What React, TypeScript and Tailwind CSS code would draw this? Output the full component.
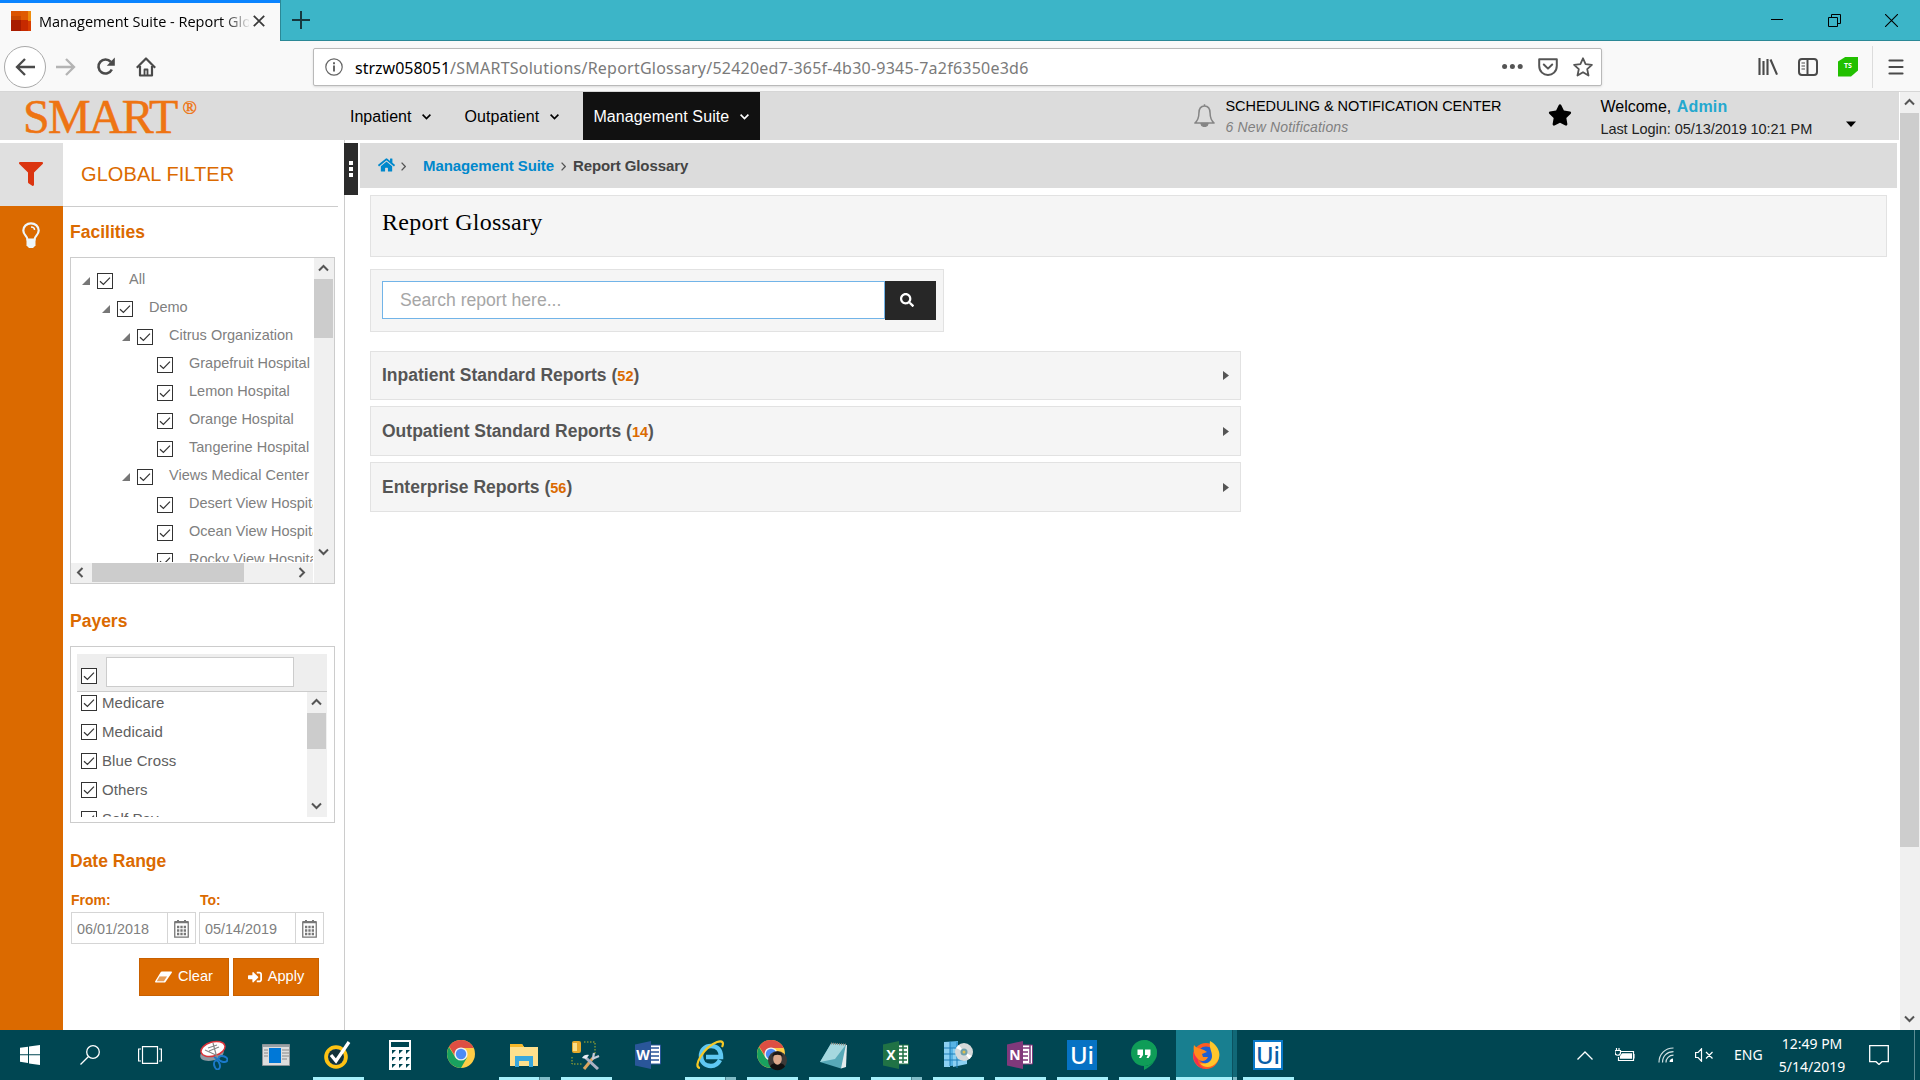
import type { ReactNode } from "react";
import { FaFilter, FaHome, FaSearch, FaStar, FaSignInAlt } from "react-icons/fa";

function CheckBox() {
  return (
    <svg className="block size-4 shrink-0" viewBox="0 0 16 16" fill="none">
      <rect x="0.5" y="0.5" width="15" height="15" fill="#fff" stroke="#333" />
      <path d="M3 8.2l3.4 3.3L13 4.6" stroke="#333" strokeWidth="1.2" />
    </svg>
  );
}

type Direction = "up" | "down" | "left" | "right";

const arrowPaths: Record<Direction, string> = {
  up: "M1 7.5L5.5 3L10 7.5",
  down: "M1 3.5L5.5 8L10 3.5",
  left: "M7.5 1L3 5.5L7.5 10",
  right: "M3.5 1L8 5.5L3.5 10",
};

function ScrollArrow({ dir }: { dir: Direction }) {
  return (
    <svg className="block size-[11px]" viewBox="0 0 11 11" fill="none">
      <path d={arrowPaths[dir]} stroke="#555" strokeWidth="2" />
    </svg>
  );
}

function TitleBar() {
  return (
    <div className="flex h-[41px] bg-[#3cb5c8]">
      <div className="flex h-[41px] w-[280px] shrink-0 border-t-[3px] border-[#0a84ff] bg-[#f9f9f9] pl-[11px]">
        <svg className="mt-2 size-5 shrink-0" viewBox="0 0 20 20">
          <path d="M0 0h20v20H0z" fill="#c62a00" />
          <path d="M0 0h10v5H0z" fill="#dc5400" />
          <path d="M0 5h10v4H0z" fill="#c84800" />
          <path d="M10 0h7v9h-7z" fill="#e05a00" />
          <path d="M17 0h3v10h-3z" fill="#ee8c0c" />
          <path d="M0 9h10v11H0z" fill="#a81c00" />
          <path d="M17 10h3v10h-3z" fill="#d83c00" />
        </svg>
        <div className="mt-2 ml-2 h-[22px] w-[210px] overflow-hidden bg-gradient-to-r from-black from-85% to-[#e8e8e8] to-100% bg-clip-text font-['Open_Sans',sans-serif] text-[14.5px] leading-[22px] whitespace-nowrap text-transparent">
          Management Suite - Report Glo
        </div>
        <svg className="mt-3 ml-[4px] size-3 shrink-0" viewBox="0 0 12 12" stroke="#3a3a3a" strokeWidth="1.8">
          <path d="M.8.8l10.4 10.4M11.2.8L.8 11.2" />
        </svg>
      </div>
      <div className="flex flex-1 border-b border-l border-[#2b8896] pl-[11px]">
        <svg className="mt-[11px] size-[18px]" viewBox="0 0 18 18" stroke="#16373d" strokeWidth="2">
          <path d="M9 0v18M0 9h18" />
        </svg>
        <div className="ml-auto flex h-10 items-center pr-[22px]">
          <svg className="mr-[45px] h-3 w-3" viewBox="0 0 12 12" stroke="#000">
            <path d="M0 5.5h12" />
          </svg>
          <svg className="mr-[44px] size-[13px]" viewBox="0 0 13 13" fill="none" stroke="#000">
            <path d="M.5 3.5h9v9h-9zM3.5 3.5v-3h9v9h-3" />
          </svg>
          <svg className="size-[13px]" viewBox="0 0 13 13" stroke="#000" strokeWidth="1.1">
            <path d="M0 0l13 13M13 0L0 13" />
          </svg>
        </div>
      </div>
    </div>
  );
}

function AddressBar() {
  return (
    <div className="flex h-[51px] items-center border-b border-[#d6d6d6] bg-[#f9f9f9] pt-px">
      <div className="ml-1 flex size-[42px] items-center justify-center rounded-full border border-[#a9a9a9] bg-white">
        <svg className="mr-px h-[18px] w-5" viewBox="0 0 20 18" fill="none" stroke="#4a4a4a" strokeWidth="2.3">
          <path d="M20 9H2M10 1L2 9l8 8" />
        </svg>
      </div>
      <svg className="ml-[10px] h-[18px] w-5" viewBox="0 0 20 18" fill="none" stroke="#b4b4b4" strokeWidth="2.3">
        <path d="M0 9h18M10 1l8 8-8 8" />
      </svg>
      <svg className="ml-5 size-[19px]" viewBox="0 0 19 19" fill="none" stroke="#4a4a4a" strokeWidth="2.6">
        <path d="M15.8 12.5a7 7 0 1 1-1-7.6" />
        <path d="M18.8.5v8.2h-8z" fill="#4a4a4a" stroke="none" />
      </svg>
      <svg className="ml-[21px] size-5" viewBox="0 0 20 20" fill="none" stroke="#4a4a4a" strokeWidth="2.2" strokeLinejoin="round">
        <path d="M.8 10.8L10 1.5l9.2 9.3M4 9v9.5h12V9" />
        <path d="M8.5 18v-5.5h3V18" strokeWidth="1.8" />
      </svg>
      <div className="ml-[157px] flex h-[38px] w-[1289px] items-center rounded-[2px] border border-[#b9b9b9] bg-white shadow-sm">
        <svg className="ml-[11px] size-[18px]" viewBox="0 0 18 18" fill="none" stroke="#666">
          <circle cx="9" cy="9" r="8.2" strokeWidth="1.2" />
          <path d="M9 7.6v6M9 4.2v2" strokeWidth="2" />
        </svg>
        <div className="mt-0.5 ml-3 font-['Noto_Sans',sans-serif] text-base whitespace-nowrap text-black">
          strzw058051
          <span className="tracking-[0.23px] text-[#7a7a7a]">/SMARTSolutions/ReportGlossary/52420ed7-365f-4b30-9345-7a2f6350e3d6</span>
        </div>
        <svg className="ml-auto h-[5px] w-[21px]" viewBox="0 0 21 5" fill="#555">
          <circle cx="2.6" cy="2.5" r="2.5" />
          <circle cx="10.4" cy="2.5" r="2.5" />
          <circle cx="18.2" cy="2.5" r="2.5" />
        </svg>
        <svg className="ml-[15px] h-[18px] w-5" viewBox="0 0 20 18" fill="none" stroke="#555" strokeWidth="2" strokeLinecap="round" strokeLinejoin="round">
          <path d="M1.2 1.2h17.6v6.5c0 12.3-17.6 12.3-17.6 0z" />
          <path d="M5.8 6.5L10 10.6l4.2-4.1" />
        </svg>
        <svg className="mr-2 ml-[15px] size-5" viewBox="0 0 20 20" fill="none" stroke="#555" strokeWidth="1.8" strokeLinejoin="round">
          <path d="M10 1.3l2.6 5.8 6.3.7-4.7 4.3 1.3 6.4-5.5-3.3-5.5 3.3 1.3-6.4L1.1 7.8l6.3-.7z" />
        </svg>
      </div>
      <svg className="ml-[156px] h-[18px] w-5" viewBox="0 0 20 18" stroke="#4a4a4a" strokeWidth="2.1">
        <path d="M1.5 0v17M5.5 3v14M9.500 1v16M12.500 1.500l6.500 15.200" />
      </svg>
      <svg className="ml-5 h-[18px] w-5" viewBox="0 0 20 18" fill="none" stroke="#4a4a4a" strokeWidth="2">
        <rect x="1" y="1" width="18" height="16" rx="3" />
        <path d="M9.5 1v16" />
        <path d="M3.5 5h3.5M3.5 8h3.5M3.5 11h3.5" strokeWidth="1.2" />
      </svg>
      <div className="ml-5 flex h-5 w-5 items-center justify-center bg-[#22c000] font-['Open_Sans',sans-serif] text-[7px] font-bold text-white [clip-path:polygon(40%_0,100%_0,100%_70%,65%_100%,0_100%,0_25%)]">
        TS
      </div>
      <div className="ml-[14px] h-[42px] w-px bg-[#dcdcdc]" />
      <svg className="ml-[15px] h-4 w-4" viewBox="0 0 16 16" stroke="#4a4a4a" strokeWidth="2.2" strokeLinecap="round">
        <path d="M1.5 1.5h13M1.5 8h13M1.5 14.5h13" />
      </svg>
    </div>
  );
}

function Chevron({ className = "" }: { className?: string }) {
  return (
    <svg className={`h-1.5 w-[9px] ${className}`} viewBox="0 0 9 6" fill="none" stroke="currentColor" strokeWidth="1.6">
      <path d="M.6.6l3.9 4L8.4.6" />
    </svg>
  );
}

function AppHeader() {
  return (
    <div className="flex h-12 bg-[#dcdcdc] text-black">
      <div className="flex w-[350px] items-start pl-[23px] font-['Liberation_Serif',serif] text-[#ee7413]">
        <span className="mt-[-2px] text-[48px] leading-[54px] tracking-[-1.8px] [-webkit-text-stroke:0.5px_#ee7413]">SMART</span>
        <span className="mt-[6px] ml-[6px] text-[19px] leading-5 [-webkit-text-stroke:0.4px_#ee7413]">®</span>
      </div>
      <div className="flex items-center text-base whitespace-nowrap">
        <span className="mt-0.5">Inpatient</span>
        <Chevron className="mt-0.5 ml-[11px]" />
        <span className="mt-0.5 ml-[33px] tracking-[0.12px]">Outpatient</span>
        <Chevron className="mt-0.5 ml-[11px]" />
        <div className="ml-6 flex h-12 w-[177px] items-center bg-[#111] pl-[10px] text-white">
          <span className="mt-0.5 tracking-[0.1px]">Management Suite</span>
          <Chevron className="mt-0.5 ml-[11px]" />
        </div>
      </div>
      <svg className="mt-3 ml-[434px] h-[23px] w-[21px]" viewBox="0 0 21 23" fill="none" stroke="#858585" strokeWidth="1.5" strokeLinejoin="round">
        <path d="M10.5 2c-4 0-5.6 3.300-5.600 7.300 0 5-2 8-4 9.700h19.200c-2-1.700-4-4.700-4-9.700 0-4-1.600-7.300-5.600-7.300zM10.500 2V.3" />
        <path d="M7 19.500c.5 3.800 6.500 3.800 7 0z" fill="#858585" />
      </svg>
      <div className="ml-[10px] w-[277px] whitespace-nowrap">
        <div className="mt-[5px] text-[14.5px] leading-[18px] tracking-[-0.05px]">SCHEDULING &amp; NOTIFICATION CENTER</div>
        <div className="mt-[3px] text-sm leading-[18px] tracking-[0.17px] text-[#808080] italic">6 New Notifications</div>
      </div>
      <FaStar className="mt-[11px] ml-[46px] size-6" />
      <div className="ml-[28px] w-[212px] whitespace-nowrap">
        <div className="mt-[5px] text-base leading-5">
          Welcome, <span className="ml-px font-bold tracking-[0.2px] text-[#24a8cf]">Admin</span>
        </div>
        <div className="mt-[3px] text-[14.500px] leading-[18px] tracking-[-0.06px] text-[#222]">Last Login: 05/13/2019 10:21 PM</div>
      </div>
      <svg className="mt-[29px] ml-[34px] h-[6px] w-[10px]" viewBox="0 0 10 6">
        <path d="M0 .5h10L5 6z" />
      </svg>
    </div>
  );
}

const tree = [
  { label: "All", level: 0, open: true },
  { label: "Demo", level: 1, open: true },
  { label: "Citrus Organization", level: 2, open: true },
  { label: "Grapefruit Hospital", level: 3 },
  { label: "Lemon Hospital", level: 3 },
  { label: "Orange Hospital", level: 3 },
  { label: "Tangerine Hospital", level: 3 },
  { label: "Views Medical Center", level: 2, open: true },
  { label: "Desert View Hospital", level: 3 },
  { label: "Ocean View Hospital", level: 3 },
  { label: "Rocky View Hospital", level: 3 },
];

const indents = ["pl-[11px]", "pl-[31px]", "pl-[51px]", "pl-[71px]"];

const payers = ["Medicare", "Medicaid", "Blue Cross", "Others", "Self Pay"];

function Heading({ children }: { children: ReactNode }) {
  return <div className="text-[17.5px] leading-6 font-bold text-[#db6a00]">{children}</div>;
}

function DateField({ value }: { value: string }) {
  return (
    <div className="flex h-8 w-[125px] border border-[#d5d5d5] bg-white">
      <div className="w-[96px] border-r border-[#d5d5d5] pl-[5px] text-[14.4px] leading-8 text-[#808080]">{value}</div>
      <svg className="mt-[7px] ml-[6px] h-[18px] w-[15px]" viewBox="0 0 15 18" fill="none" stroke="#777">
        <path d="M.75 2h13.500v15.200H.75z" strokeWidth="1.300" />
        <path d="M1 2.200h13M3 1h2M10 1h2" strokeWidth="2.200" />
        <path d="M3 7h9M3 10.500h9M3 14h9" strokeWidth="2.400" strokeDasharray="2.300 1.050" />
      </svg>
    </div>
  );
}

function Sidebar() {
  return (
    <div className="flex w-[345px] shrink-0 border-r border-[#ccc]">
      <div className="mt-[3px] w-[63px] shrink-0 bg-[#db6a00]">
        <div className="flex h-[63px] pt-[19px] pl-[19px] bg-[#e0e0e0]">
          <FaFilter className="size-6 text-[#db3510]" />
        </div>
        <svg className="mt-4 ml-[22px] h-[27px] w-[18px]" viewBox="0 0 18 27" fill="none" stroke="#eef6fa" strokeWidth="2.200">
          <path d="M5.500 17.500C5.500 14 1.300 13 1.300 8.500a7.700 7.200 0 0 1 15.400 0c0 4.500-4.200 5.500-4.200 9z" />
          <path d="M9 5c2 0 3.500 1 3.500 3" strokeWidth="1.500" />
          <path d="M4.500 17h9v6.500L11 26H7l-2.500-2.500z" fill="#eef6fa" stroke="none" />
        </svg>
      </div>
      <div className="w-[275px]">
        <div className="h-[67px] border-b border-[#ccc] pl-[18px] text-xl leading-[69px] tracking-[0.08px] text-[#db6a00]">GLOBAL FILTER</div>
        <div className="pl-[7px]">
          <div className="mt-[13px]">
            <Heading>Facilities</Heading>
          </div>
          <div className="mt-[13px] flex h-[327px] w-[265px] flex-col border border-[#ccc]">
            <div className="flex h-[304px]">
              <div className="mr-px h-[304px] w-[242px] overflow-hidden pt-2">
                {tree.map((n) => (
                  <div key={n.label} className={`flex h-7 items-center ${indents[n.level]}`}>
                    <svg className="mt-px mr-[7px] size-2 shrink-0" viewBox="0 0 8 8">
                      {n.open && <path d="M8 0v8H0z" fill="#777" />}
                    </svg>
                    <div className="mt-px">
                      <CheckBox />
                    </div>
                    <span className="-mt-[3px] ml-4 text-[14.5px] leading-5 whitespace-nowrap text-[#808080]">{n.label}</span>
                  </div>
                ))}
              </div>
              <div className="flex w-5 flex-col items-center bg-[#f0f0f0] pt-[5px] pr-px pb-[5px]">
                <ScrollArrow dir="up" />
                <div className="mt-[5px] h-[59px] w-[19px] bg-[#ccc]" />
                <div className="mt-auto">
                  <ScrollArrow dir="down" />
                </div>
              </div>
            </div>
            <div className="flex h-[21px]">
              <div className="mt-px flex h-5 w-[242px] items-center bg-[#f0f0f0] pb-px pl-1">
                <ScrollArrow dir="left" />
                <div className="ml-[6px] h-[19px] w-[152px] bg-[#ccc]" />
                <div className="mr-[6px] ml-auto">
                  <ScrollArrow dir="right" />
                </div>
              </div>
              <div className="ml-px w-5 bg-[#f0f0f0]" />
            </div>
          </div>
          <div className="mt-[25px]">
            <Heading>Payers</Heading>
          </div>
          <div className="mt-[13px] h-[177px] w-[265px] border border-[#ccc] pt-[7px] pl-[6px]">
            <div className="flex h-[38px] w-[250px] border-b border-[#ccc] bg-[#eee] pl-1">
              <div className="mt-[14px]">
                <CheckBox />
              </div>
              <input className="mt-[3px] ml-[9px] h-[30px] w-[188px] border border-[#ccc] bg-white" readOnly />
            </div>
            <div className="flex h-[125px] w-[250px]">
              <div className="h-[125px] w-[230px] overflow-hidden pl-1">
                {payers.map((p) => (
                  <div key={p} className="flex h-[29px] items-start pt-[3px]">
                    <CheckBox />
                    <span className="-mt-0.5 ml-[5px] text-[15px] leading-5 tracking-[0.1px] text-[#606060]">{p}</span>
                  </div>
                ))}
              </div>
              <div className="flex w-5 flex-col items-center bg-[#f0f0f0] pt-[5px] pr-px pb-[6px]">
                <ScrollArrow dir="up" />
                <div className="mt-[5px] h-9 w-[19px] bg-[#ccc]" />
                <div className="mt-auto">
                  <ScrollArrow dir="down" />
                </div>
              </div>
            </div>
          </div>
          <div className="mt-[26px]">
            <Heading>Date Range</Heading>
          </div>
          <div className="mt-[17px] ml-px flex text-sm leading-5 font-bold text-[#db6a00]">
            <span className="w-[129px]">From:</span>
            <span>To:</span>
          </div>
          <div className="mt-[2px] ml-px flex gap-[3px]">
            <DateField value="06/01/2018" />
            <DateField value="05/14/2019" />
          </div>
          <div className="mt-[14px] ml-[69px] flex gap-1 text-[14.600px] text-white">
            <button className="flex h-[38px] w-[90px] items-center justify-center gap-[6px] border border-[#c86000] bg-[#db6a00]">
              <svg className="h-3 w-[17px]" viewBox="0 0 17 12" fill="#fff">
                <path fillRule="evenodd" d="M6.800.5h9.500q1 .2.500 1.200L10.500 11q-.4.500-1 .5H.7q-1-.3-.5-1.200L5.800 1q.4-.5 1-.5zM4.600 5.600L1.800 10.200h7.100l3.100-4.600z" />
                <path d="M4.600 5.200L1 11h8.300l3.500-5.800z" opacity="0.350" />
              </svg>
              <span>Clear</span>
            </button>
            <button className="flex h-[38px] w-[86px] items-center justify-center gap-[6px] border border-[#c86000] bg-[#db6a00]">
              <FaSignInAlt className="size-[14px]" />
              <span>Apply</span>
            </button>
          </div>
        </div>
      </div>
    </div>
  );
}

const sections = [
  { title: "Inpatient Standard Reports", count: 52, box: "h-[49px]" },
  { title: "Outpatient Standard Reports", count: 14, box: "h-[50px]" },
  { title: "Enterprise Reports", count: 56, box: "h-[50px]" },
];

function SmallChevron({ className = "" }: { className?: string }) {
  return (
    <svg className={`h-[9px] w-[5px] ${className}`} viewBox="0 0 5 9" fill="none" stroke="#555" strokeWidth="1.300">
      <path d="M.6.6l3.700 3.900L.6 8.400" />
    </svg>
  );
}

function Main() {
  return (
    <div className="relative flex-1 pt-[3px] pl-[15px]">
      <div className="absolute top-[3px] -left-px flex h-[52px] w-[14px] flex-col items-center justify-center gap-[2px] bg-[#2b2b2b]">
        <div className="size-1 bg-white" />
        <div className="size-1 bg-white" />
        <div className="size-1 bg-white" />
      </div>
      <div className="flex h-[45px] w-[1537px] items-center bg-[#dcdcdc] pl-[18px] text-[15px] font-bold">
        <FaHome className="-mt-px h-4 w-[17px] text-[#0088cc]" />
        <SmallChevron className="mt-px ml-[6px]" />
        <span className="mt-0.5 ml-[17px] tracking-[-0.1px] text-[#0088cc]">Management Suite</span>
        <SmallChevron className="mt-px ml-[7px]" />
        <span className="mt-0.5 ml-[7px] tracking-[-0.1px] text-[#444]">Report Glossary</span>
      </div>
      <div className="pl-[10px]">
        <div className="mt-[7px] h-[62px] w-[1517px] border border-[#e2e2e2] bg-[#f5f5f5] pt-[10px] pl-[11px] font-['Liberation_Serif',serif] text-2xl leading-8 tracking-[0.26px] text-black">
          Report Glossary
        </div>
        <div className="mt-3 flex h-[63px] w-[574px] border border-[#e2e2e2] bg-[#f5f5f5] pt-[11px] pl-[11px]">
          <input
            className="h-[38px] w-[503px] border border-[#72b4e8] bg-white pl-[17px] text-[17.600px] outline-none placeholder:text-[#a6a6a6]"
            placeholder="Search report here..."
          />
          <button className="flex h-[39px] w-[51px] items-center bg-[#272727] pl-[15px] text-white">
            <FaSearch className="mb-px size-[14px]" />
          </button>
        </div>
        <div className="mt-[19px] flex flex-col gap-[6px]">
          {sections.map((s) => (
            <div key={s.title} className={`flex w-[871px] items-center border border-[#e2e2e2] bg-[#f5f5f5] pr-[11px] pl-[11px] ${s.box}`}>
              <div className="text-[17.500px] leading-6 font-bold text-[#555]">
                {s.title} (<span className="text-[14.500px] text-[#db6a00]">{s.count}</span>)
              </div>
              <svg className="ml-auto h-[9px] w-[6px]" viewBox="0 0 6 9" fill="#555">
                <path d="M0 0l6 4.500L0 9z" />
              </svg>
            </div>
          ))}
        </div>
      </div>
    </div>
  );
}

function UiPath({ inverted = false }: { inverted?: boolean }) {
  return (
    <div
      className={
        inverted
          ? "flex size-[30px] items-center justify-center border-2 border-[#0a78c8] bg-white font-['Noto_Sans',sans-serif] text-[24px] leading-none font-medium text-[#0a5fa8]"
          : "flex size-[30px] items-center justify-center bg-[#0672c4] font-['Noto_Sans',sans-serif] text-[24px] leading-none font-medium text-white"
      }
    >
      Ui
    </div>
  );
}

function OfficeIcon({ letter, color }: { letter: string; color: string }) {
  const lines: Record<string, string> = {
    W: "M17 7h8M17 11h8M17 15h8M17 19h8",
    X: "M16 7h9M16 11h9M16 15h9M16 19h9M21 4v18",
    N: "M16 7h8M16 11h6M16 15h6M16 19h6M24 4v18",
  };
  return (
    <svg className="size-7" viewBox="0 0 28 28">
      <path d="M14 4h12.500v19H14z" fill="#fff" stroke={color} />
      <path d={lines[letter]} stroke={color} strokeWidth="1.500" />
      <path d="M1 3.500L17 0v28L1 24.500z" fill={color} />
      <text x="9" y="19" fontSize="14" fontWeight="bold" textAnchor="middle" fill="#fff" fontFamily="Open Sans, sans-serif">
        {letter}
      </text>
    </svg>
  );
}

function ChromeIcon({ badge = false }: { badge?: boolean }) {
  return (
    <svg className="h-8 w-[30px]" viewBox="0 0 30 32">
      <circle cx="14" cy="15" r="14" fill="#ffcd46" />
      <path d="M14 15L1.900 8A14 14 0 0 1 26.600 9H14z" fill="#dd4f43" />
      <path d="M1.900 8A14 14 0 0 0 14 29l6.300-11L14 21 8.200 18z" fill="#19a15f" />
      <path d="M1.900 8L8 18l3-8z" fill="#dd4f43" transform="translate(.3 -.5)" />
      <circle cx="14" cy="15" r="6.600" fill="#f1f1f1" />
      <circle cx="14" cy="15" r="5.200" fill="#4c8bf5" />
      {badge && (
        <g>
          <circle cx="20.500" cy="21.500" r="9.500" fill="#3d3a38" />
          <path d="M13 27.500c2-5 13-5 15 0a9.500 9.500 0 0 1-15 0z" fill="#111" />
          <ellipse cx="20.500" cy="20" rx="4.300" ry="5.800" fill="#dca98c" />
          <path d="M15.500 18c-1-7 11-7 10 0-1-3-9-3-10 0z" fill="#1c1817" />
        </g>
      )}
    </svg>
  );
}

function TaskSlot({ children, bar, stacked, active }: { children: ReactNode; bar?: boolean; stacked?: boolean; active?: boolean }) {
  return (
    <div className={`flex h-[50px] w-[62px] shrink-0 ${active ? "pl-px" : "pl-[6px]"}`}>
      <div className={`flex flex-col ${active ? "w-14 bg-[#187f90]" : "w-[51px]"}`}>
        <div className={`flex h-[47px] items-center justify-center pt-[3px] ${active ? "pl-1" : "pr-px"}`}>{children}</div>
        <div className="flex h-[3px]">
          <div className={`h-[3px] flex-1 ${bar ? "bg-[#a6f0fb]" : ""}`} />
          {stacked && <div className="h-[3px] w-[11px] border-l border-[#4d8590] bg-[#80bcc7]" />}
        </div>
      </div>
      {active && (
        <div className="flex w-[5px] shrink-0 flex-col justify-end border-l border-[#0b5260] bg-[#116877]">
          <div className="h-[3px] bg-[#80bcc7]" />
        </div>
      )}
    </div>
  );
}

function Taskbar() {
  return (
    <div className="flex h-[50px] items-center overflow-hidden bg-[#004652] text-white">
      <svg className="ml-5 size-5 shrink-0" viewBox="0 0 20 20" fill="#fff">
        <path d="M0 2.800L8 1.700v7.500H0zM9 1.500L20 0v9.200H9zM0 10.200h8v7.700l-8-1.100zM9 10.200h11V20L9 18.400z" />
      </svg>
      <svg className="ml-10 size-5 shrink-0" viewBox="0 0 20 20" fill="none" stroke="#fff" strokeWidth="1.300">
        <circle cx="13" cy="7" r="6.300" />
        <path d="M8.500 11.500L.5 19.500" />
      </svg>
      <svg className="ml-[38px] h-[18px] w-6 shrink-0" viewBox="0 0 24 18" fill="none" stroke="#fff" strokeWidth="1.200">
        <path d="M4.500.6h15v16.800h-15zM3 3H.6v12H3M21 3h2.400v12H21" />
      </svg>
      <div className="ml-[21px] flex">
        <TaskSlot>
          <svg className="h-[30px] w-7" viewBox="0 0 28 30">
            <ellipse cx="12" cy="14" rx="12" ry="6.500" fill="#8c9aa3" transform="rotate(-14 12 14)" />
            <ellipse cx="13" cy="9" rx="12.300" ry="7" fill="#fff" stroke="#d8343a" strokeWidth="1.500" transform="rotate(-16 13 9)" />
            <path d="M13 3l4 15M5 10l13 6M8 8l9-3M9 11l10-4" stroke="#888" strokeWidth="1.200" />
            <g fill="none" stroke="#1b79c9" strokeWidth="2">
              <ellipse cx="23" cy="19" rx="4.500" ry="2.800" transform="rotate(15 23 19)" />
              <ellipse cx="17" cy="25" rx="2.800" ry="4.500" transform="rotate(-15 17 25)" />
              <path d="M14 17l5 3" />
            </g>
          </svg>
        </TaskSlot>
        <TaskSlot>
          <svg className="h-[22px] w-7" viewBox="0 0 28 22">
            <path d="M.5.500h27v21H.5z" fill="#ddd" stroke="#8b9397" />
            <path d="M1 1h26v2H1z" fill="#9aa0a4" />
            <path d="M7 4h12v15H7z" fill="#0078d7" />
            <path d="M2 6h4M2 9h4M2 12h4M20 6h7M20 9h7M20 12h7M20 15h5" stroke="#888" />
          </svg>
        </TaskSlot>
        <TaskSlot bar>
          <svg className="size-7" viewBox="0 0 28 28" fill="none">
            <circle cx="12" cy="16" r="9.800" fill="#fff" stroke="#fdc313" strokeWidth="4" />
            <circle cx="12" cy="16" r="8" fill="#12323a" />
            <path d="M7 14l5 6L25 1" stroke="#fff" strokeWidth="3.200" />
          </svg>
        </TaskSlot>
        <TaskSlot>
          <svg className="h-[30px] w-[22px]" viewBox="0 0 22 30">
            <path d="M0 0h22v30H0z" fill="#fff" />
            <path d="M2 2h18v5H2zM3 10h4l-4 4zM10 10h4l-4 4zM17 10h4l-4 4zM3 17h4l-4 4zM10 17h4l-4 4zM17 17h4l-4 4zM3 24h4l-4 4zM10 24h4l-4 4zM17 24h4l-4 4z" fill="#004652" />
          </svg>
        </TaskSlot>
        <TaskSlot>
          <ChromeIcon />
        </TaskSlot>
        <TaskSlot bar stacked>
          <svg className="h-6 w-7" viewBox="0 0 28 24">
            <path d="M0 1h12l2 3h14v19H0z" fill="#ffe08c" />
            <path d="M0 1h12l2 3H0z" fill="#f7b829" />
            <path d="M5 24V13h18v11h-4v-6H9v6z" fill="#3aa8dc" />
          </svg>
        </TaskSlot>
        <TaskSlot bar>
          <svg className="size-[30px]" viewBox="0 0 30 30" fill="none">
            <rect x="1" y="1" width="9" height="12" rx="2" fill="#e6a92b" />
            <path d="M2 3h4v8H2z" fill="#fbe08a" />
            <path d="M13 2h11v12M1 17v7h11" stroke="#b5b52a" strokeDasharray="1.500 1.500" />
            <path d="M13 29l9-11" stroke="#d9a55e" strokeWidth="3" />
            <path d="M21 19l7-3M22 18l1-5" stroke="#c5ccd8" strokeWidth="2.200" />
            <path d="M15 18l12 11" stroke="#aab2c4" strokeWidth="3" />
            <path d="M11 18c1-3 5-4 7-3l-3 4z" fill="#e8edf4" />
          </svg>
        </TaskSlot>
        <TaskSlot>
          <OfficeIcon letter="W" color="#2a5699" />
        </TaskSlot>
        <TaskSlot bar stacked>
          <svg className="h-[30px] w-[30px]" viewBox="0 0 30 30" fill="none">
            <path d="M25 20c-2 4-5 6-9 6-6 0-10-4-10-10S10 6 16 6s10 4 10 11H11" stroke="#5fc8f2" strokeWidth="4.500" />
            <path d="M5 28C-3 27 9 7 22 2c6-2 7 1 5 5" stroke="#f7c925" strokeWidth="2.200" />
          </svg>
        </TaskSlot>
        <TaskSlot bar>
          <ChromeIcon badge />
        </TaskSlot>
        <TaskSlot bar>
          <svg className="h-[27px] w-7" viewBox="0 0 28 27">
            <path d="M12 2l15 1-1 22-5 1.500z" fill="#e4ecee" />
            <path d="M11 1.500l15 1-5 24L0 20z" fill="#57a9b8" />
            <path d="M11 1.500l15 1L15 17 0 20z" fill="#a5d8df" />
            <path d="M11 1.500l15 1.200" stroke="#8c8c80" strokeWidth="2" strokeDasharray="1 1" />
          </svg>
        </TaskSlot>
        <TaskSlot bar stacked>
          <OfficeIcon letter="X" color="#207245" />
        </TaskSlot>
        <TaskSlot bar>
          <svg className="h-[30px] w-[30px]" viewBox="0 0 30 30">
            <path d="M1 2l14-1v24L1 27z" fill="#58b4e5" />
            <path d="M1 2l6 0v25l-6 0zM10 8l14 4v12l-14 3z" fill="#8bd0f2" />
            <path d="M1 8h13M1 14h14M1 20h20M7 2v24M14 2v26" stroke="#1f7fb8" />
            <circle cx="21" cy="12" r="9" fill="#d6d9d9" />
            <path d="M21 12l-8-4 3-3zM21 12l8 4-3 3z" fill="#fff" />
            <circle cx="21" cy="12" r="3.500" fill="#6fa0ab" />
            <circle cx="21" cy="12" r="1.500" fill="#e0c050" />
          </svg>
        </TaskSlot>
        <TaskSlot bar>
          <OfficeIcon letter="N" color="#80397b" />
        </TaskSlot>
        <TaskSlot bar>
          <UiPath />
        </TaskSlot>
        <TaskSlot bar>
          <svg className="h-[30px] w-[26px]" viewBox="0 0 26 30">
            <path d="M13 0a13 13 0 1 1 0 26v4C19 27 26 21 26 13z" fill="#0f9d58" />
            <circle cx="13" cy="13" r="13" fill="#0f9d58" />
            <path d="M6.500 9.500H12V15l-2 3H8l1.300-3H6.500zM14 9.500h5.500V15l-2 3h-2l1.300-3H14z" fill="#fff" />
          </svg>
        </TaskSlot>
        <TaskSlot bar active>
          <svg className="size-7" viewBox="0 0 28 28">
            <circle cx="14" cy="15" r="13" fill="#ff5a22" />
            <path d="M1.500 11C0 22 8 28 14 28c-7-2-9-8-8-13z" fill="#f0304e" />
            <circle cx="14" cy="14" r="8.500" fill="#1d5fd0" />
            <path d="M18 0c9 5 12 14 7 21-5 7-14 6-17 1 6 2 12-1 12-7 0-5-3-7-2-15z" fill="#ffc62b" />
            <path d="M2 4c3 4 6 3 10 5l3 2-5 2 1 3h5c-2 5-8 5-11 1C2 14 1 9 2 4z" fill="#ff8a1c" />
          </svg>
        </TaskSlot>
        <TaskSlot bar>
          <UiPath inverted />
        </TaskSlot>
      </div>
      <div className="ml-auto flex h-[50px] items-center font-['Noto_Sans',sans-serif] text-sm whitespace-nowrap">
        <svg className="mr-[22px] h-[9px] w-4" viewBox="0 0 16 9" fill="none" stroke="#fff" strokeWidth="1.300">
          <path d="M.5 8.500L8 1l7.500 7.500" />
        </svg>
        <svg className="mr-[23px] h-[14px] w-5" viewBox="0 0 20 14" fill="none" stroke="#fff" strokeWidth="1.200">
          <path d="M6 3.500h12.500v9H3.500V9M19 6v4.500M0 2.500h5.500v2a2.700 2.700 0 0 1-5.500 0zM1.500 2.500V0M4 2.500V0" />
          <path d="M7 5.300h10v5.500H5V8z" fill="#fff" stroke="none" />
        </svg>
        <svg className="mr-[21px] size-4" viewBox="0 0 16 16" fill="none" stroke="#d4e3e5" strokeWidth="1.200">
          <path d="M1 15.500C1 7 7 1 15.500 1M4.500 15.500C4.500 9 9 4.600 15.500 4.600M8 15.500c0-4 3-7.300 7.500-7.300" />
          <path d="M11.500 15c0-2 1.500-3.500 3.500-3.500V15z" fill="#fff" stroke="none" />
        </svg>
        <svg className="mr-5 h-[14px] w-[19px]" viewBox="0 0 19 14" fill="none" stroke="#fff" strokeWidth="1.200">
          <path d="M.6 4.500h2.500L6.500.8v12.400L3.100 9.500H.6zM11 4l6.500 6.500M17.500 4L11 10.500" />
        </svg>
        <span className="w-[29px]">ENG</span>
        <div className="ml-[13px] w-[72px] pb-px text-center leading-[23px]">
          <div>12:49 PM</div>
          <div>5/14/2019</div>
        </div>
        <svg className="mr-[25px] ml-[21px] size-5" viewBox="0 0 20 20" fill="none" stroke="#fff" strokeWidth="1.300">
          <path d="M.7.7h18.600v16H13l-3 2.800-3-2.800H.7z" />
        </svg>
        <div className="mr-[5px] h-[50px] w-px bg-[#5c8c94]" />
      </div>
    </div>
  );
}

export default function App() {
  return (
    <div className="flex h-[1080px] w-[1920px] flex-col overflow-hidden bg-white font-['Liberation_Sans',sans-serif]">
      <TitleBar />
      <AddressBar />
      <div className="flex h-[938px]">
        <div className="flex w-[1899px] flex-col">
          <AppHeader />
          <div className="flex flex-1">
            <Sidebar />
            <Main />
          </div>
        </div>
        <div className="ml-px flex w-5 flex-col items-center bg-[#f0f0f0] pt-[5px] pr-px pb-[6px]">
          <ScrollArrow dir="up" />
          <div className="mt-[5px] h-[734px] w-[19px] bg-[#cdcdcd]" />
          <div className="mt-auto">
            <ScrollArrow dir="down" />
          </div>
        </div>
      </div>
      <Taskbar />
    </div>
  );
}
